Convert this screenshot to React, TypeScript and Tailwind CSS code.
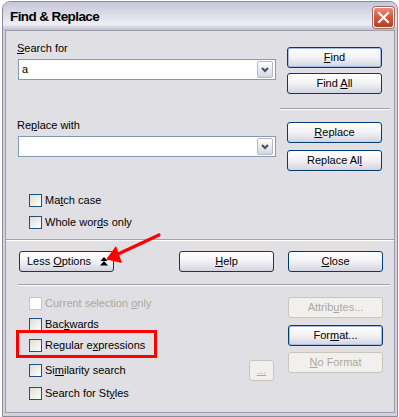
import clsx from "clsx"

const font = "font-['Liberation_Sans',Arial,sans-serif]"

function Key({ text, u }: { text: string; u: number }) {
  if (u < 0) return <>{text}</>
  return (
    <>
      {text.slice(0, u)}
      <span className="underline underline-offset-[1px]">{text[u]}</span>
      {text.slice(u + 1)}
    </>
  )
}

function Btn({
  text,
  u = -1,
  def,
  disabled,
  className,
  children,
}: {
  text: string
  u?: number
  def?: boolean
  disabled?: boolean
  className?: string
  children?: React.ReactNode
}) {
  return (
    <div
      className={clsx(
        "flex h-[21px] w-[95px] shrink-0 items-center justify-center rounded-[3px] border text-[11px] leading-none",
        disabled
          ? "border-[#c9c7ba] bg-[#f1f0ee] text-[#aca899]"
          : "border-[#003c74] bg-linear-to-b from-white via-[#f2f2f5] to-[#d4d3de] text-black",
        def && "shadow-[inset_0_0_0_1px_#a8bbe6]",
        className,
      )}
    >
      <span>
        <Key text={text} u={u} />
      </span>
      {children}
    </div>
  )
}

function Check({ text, u, disabled, className }: { text: string; u: number; disabled?: boolean; className?: string }) {
  return (
    <div className={clsx("flex h-[13px] items-center gap-[3px]", className)}>
      <div
        className={clsx(
          "h-[13px] w-[13px] shrink-0 border",
          disabled ? "border-[#cac8bb] bg-white" : "border-[#1c5180] bg-linear-to-br from-[#dcdcd7] to-white",
        )}
      />
      <span className={clsx("text-[11px] leading-none whitespace-nowrap", disabled ? "text-[#aca899]" : "text-black")}>
        <Key text={text} u={u} />
      </span>
    </div>
  )
}

function Combo({ value }: { value?: string }) {
  return (
    <div className="ml-[1px] flex h-[21px] w-[258px] items-center border border-[#7f9db9] bg-white pr-[2px] pl-[3px]">
      <span className="flex-1 text-[11px] leading-none text-black">{value}</span>
      <div className="flex h-[17px] w-[16px] items-center justify-center rounded-[2px] border border-[#b7b7c6] bg-linear-to-b from-white to-[#d6d6e2]">
        <svg width="8" height="6" viewBox="0 0 8 6">
          <polyline points="1,1 4,4 7,1" fill="none" stroke="#4d4d60" strokeWidth="2" />
        </svg>
      </div>
    </div>
  )
}

function Separator({ className }: { className?: string }) {
  return <div className={clsx("h-[2px] border-t border-b border-t-[#a3a2a8] border-b-white", className)} />
}

export default function App() {
  return (
    <div className={clsx("relative h-[417px] w-[399px] overflow-hidden bg-white pt-[1px] pl-[2px]", font)}>
      {/* Window frame */}
      <div className="flex h-[416px] w-[396px] flex-col rounded-t-[8px] border border-[#8b8b9c] bg-[#d3d3df]">
        {/* Title bar */}
        <div className="flex h-[28px] shrink-0 items-start justify-between rounded-t-[7px] bg-linear-to-b from-[#c6c6da] via-[#eeeef5] via-80% to-[#bebece] pr-[3px] pl-[7px]">
          <span className="mt-[5px] text-[13.5px] font-bold tracking-[-0.6px] text-black">Find &amp; Replace</span>
          <div className="mt-[5px] flex h-[21px] w-[21px] items-center justify-center rounded-[3px] border border-white bg-linear-to-b from-[#ea8e74] via-[#d4553a] to-[#bc3a1f] shadow-[0_0_0_1px_#9b6b66]">
            <svg width="13" height="13" viewBox="0 0 13 13">
              <path d="M2 2 L11 11 M11 2 L2 11" stroke="white" strokeWidth="2.2" strokeLinecap="square" />
            </svg>
          </div>
        </div>

        {/* Body */}
        <div className="mx-[2px] mb-[3px] flex flex-1 flex-col border border-[#9c9cab] bg-[#e0dfe3]">
          {/* Search & replace */}
          <div className="flex h-[208px] shrink-0">
            <div className="flex w-[274px] flex-col pt-[11px] pl-[11px]">
              <span className="h-[13px] text-[11px] leading-[13px] text-black">
                <Key text="Search for" u={0} />
              </span>
              <div className="mt-[4px]">
                <Combo value="a" />
              </div>
              <span className="mt-[39px] h-[13px] text-[11px] leading-[13px] text-black">
                <Key text="Replace with" u={2} />
              </span>
              <div className="mt-[4px]">
                <Combo />
              </div>
              <Check text="Match case" u={2} className="mt-[37px] ml-[12px]" />
              <Check text="Whole words only" u={9} className="mt-[9px] ml-[12px]" />
            </div>
            <div className="flex w-[110px] flex-col pt-[16px]">
              <Btn text="Find" u={0} def className="ml-[7px]" />
              <Btn text="Find All" u={5} className="mt-[5px] ml-[7px]" />
              <Separator className="mt-[14px]" />
              <Btn text="Replace" u={0} className="mt-[12px] ml-[7px]" />
              <Btn text="Replace All" u={10} className="mt-[7px] ml-[7px]" />
            </div>
          </div>

          <Separator />

          {/* Button row */}
          <div className="mt-[10px] flex">
            <Btn text="Less Options" u={5} className="ml-[13px] gap-[9px] pl-[2px]">
              <svg width="8" height="9" viewBox="0 0 8 9">
                <path d="M4 0 L7.5 4 L0.5 4 Z M4 4 L8 8.5 L0 8.5 Z" fill="black" />
              </svg>
            </Btn>
            <Btn text="Help" u={0} className="ml-[65px]" />
            <Btn text="Close" u={0} className="ml-[14px]" />
          </div>

          <Separator className="mt-[12px] ml-[12px] w-[372px]" />

          {/* More options */}
          <div className="flex">
            <div className="flex w-[243px] flex-col pt-[11px] pl-[23px]">
              <Check text="Current selection only" u={18} disabled />
              <Check text="Backwards" u={3} className="mt-[8px]" />
              <Check text="Regular expressions" u={9} className="mt-[8px]" />
              <Check text="Similarity search" u={2} className="mt-[12px]" />
              <Check text="Search for Styles" u={13} className="mt-[10px]" />
            </div>
            <div className="mt-[74px] flex h-[21px] w-[25px] items-center justify-center rounded-[3px] border border-[#c9c7ba] bg-[#f1f0ee] text-[11px] leading-none text-[#aca899]">
              <span className="underline underline-offset-[1px]">...</span>
            </div>
            <div className="ml-[14px] flex flex-col pt-[11px]">
              <Btn text="Attributes..." u={6} disabled />
              <Btn text="Format..." u={3} def className="mt-[7px]" />
              <Btn text="No Format" u={0} disabled className="mt-[6px]" />
            </div>
          </div>
        </div>
      </div>

      {/* Annotations */}
      <div className="absolute top-[330px] left-[16px] h-[28px] w-[141px] border-[3px] border-[#ff0000]" />
      <svg className="absolute top-0 left-0" width="399" height="417" viewBox="0 0 399 417">
        <line x1="159" y1="235" x2="116" y2="255" stroke="#ff0000" strokeWidth="3.2" strokeLinecap="round" />
        <path d="M106 259.5 L116 246 L122 263 Z" fill="#ff0000" />
      </svg>
    </div>
  )
}
